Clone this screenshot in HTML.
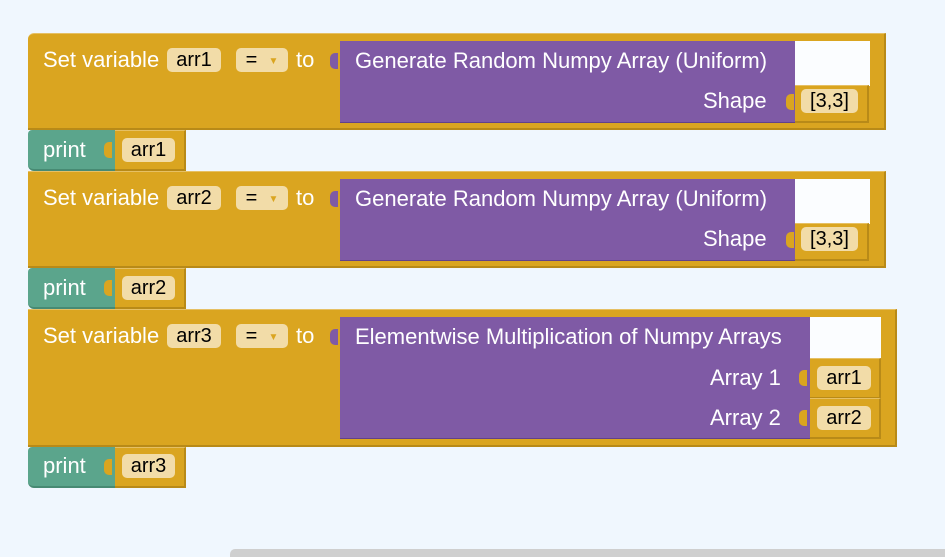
<!DOCTYPE html>
<html><head><meta charset="utf-8"><style>
body{margin:0;width:945px;height:554px;background:#f0f7fe;position:relative;overflow:hidden;font-family:"Liberation Sans",Arial,sans-serif;font-size:20px}
div,span{position:absolute;box-sizing:border-box}
.g{background:#daa520;border-bottom:2px solid #b88a18;border-right:2px solid #b88a18;border-top:1px solid #e6c064}
.p{background:#7f5aa5;border-bottom:1px solid #62428a}
.gr{background:#5ba58c;border-bottom:2px solid #478a73;border-radius:4px 0 0 6px}
.t{color:#fff;line-height:24px;white-space:nowrap;font-size:22px}
.f{background:#f2dca8;color:#000;border-radius:5px;height:24px;line-height:24px;text-align:center;white-space:nowrap}
.bg{background:#fbfdff}
.n{width:8px;height:16px;border-radius:5px 0 0 5px}
.a{position:static;color:#daa520;font-size:10px;vertical-align:2px}
</style></head><body>

<div class="g" style="left:28px;top:33px;width:858px;height:97px;border-radius:6px 0 0 0"></div>
<div class="bg" style="left:794px;top:41px;width:76px;height:45px"></div>
<div class="p" style="left:340px;top:41px;width:455px;height:82px"></div>
<span class="n" style="left:330px;top:53px;background:#7f5aa5"></span>
<span class="t" style="left:43px;top:48px">Set variable</span>
<span class="f" style="left:167px;top:48px;width:54px">arr1</span>
<span class="f" style="left:236px;top:48px;width:52px">= &nbsp;<span class="a">▼</span></span>
<span class="t" style="left:296px;top:48px">to</span>
<span class="t" style="left:355px;top:49px">Generate Random Numpy Array (Uniform)</span>
<span class="t" style="left:703px;top:89px">Shape</span>
<div class="g" style="left:795px;top:85px;width:74px;height:38px"></div>
<span class="n" style="left:786px;top:94px;background:#daa520"></span>
<span class="f" style="left:801px;top:89px;width:57px">[3,3]</span>

<div class="gr" style="left:28px;top:130px;width:88px;height:41px"></div>
<div class="g" style="left:115px;top:130px;width:71px;height:41px"></div>
<span class="n" style="left:104px;top:142px;background:#daa520"></span>
<span class="t" style="left:43px;top:138px">print</span>
<span class="f" style="left:122px;top:138px;width:53px">arr1</span>

<div class="g" style="left:28px;top:171px;width:858px;height:97px"></div>
<div class="bg" style="left:794px;top:179px;width:76px;height:45px"></div>
<div class="p" style="left:340px;top:179px;width:455px;height:82px"></div>
<span class="n" style="left:330px;top:191px;background:#7f5aa5"></span>
<span class="t" style="left:43px;top:186px">Set variable</span>
<span class="f" style="left:167px;top:186px;width:54px">arr2</span>
<span class="f" style="left:236px;top:186px;width:52px">= &nbsp;<span class="a">▼</span></span>
<span class="t" style="left:296px;top:186px">to</span>
<span class="t" style="left:355px;top:187px">Generate Random Numpy Array (Uniform)</span>
<span class="t" style="left:703px;top:227px">Shape</span>
<div class="g" style="left:795px;top:223px;width:74px;height:38px"></div>
<span class="n" style="left:786px;top:232px;background:#daa520"></span>
<span class="f" style="left:801px;top:227px;width:57px">[3,3]</span>

<div class="gr" style="left:28px;top:268px;width:88px;height:41px"></div>
<div class="g" style="left:115px;top:268px;width:71px;height:41px"></div>
<span class="n" style="left:104px;top:280px;background:#daa520"></span>
<span class="t" style="left:43px;top:276px">print</span>
<span class="f" style="left:122px;top:276px;width:53px">arr2</span>

<div class="g" style="left:28px;top:309px;width:869px;height:138px"></div>
<div class="bg" style="left:809px;top:317px;width:72px;height:42px"></div>
<div class="p" style="left:340px;top:317px;width:470px;height:122px"></div>
<span class="n" style="left:330px;top:329px;background:#7f5aa5"></span>
<span class="t" style="left:43px;top:324px">Set variable</span>
<span class="f" style="left:167px;top:324px;width:54px">arr3</span>
<span class="f" style="left:236px;top:324px;width:52px">= &nbsp;<span class="a">▼</span></span>
<span class="t" style="left:296px;top:324px">to</span>
<span class="t" style="left:355px;top:325px">Elementwise Multiplication of Numpy Arrays</span>
<span class="t" style="left:710px;top:366px">Array 1</span>
<span class="t" style="left:710px;top:406px">Array 2</span>
<div class="g" style="left:810px;top:358px;width:71px;height:41px"></div>
<div class="g" style="left:810px;top:398px;width:71px;height:41px"></div>
<span class="n" style="left:799px;top:370px;background:#daa520"></span>
<span class="n" style="left:799px;top:410px;background:#daa520"></span>
<span class="f" style="left:817px;top:366px;width:54px">arr1</span>
<span class="f" style="left:817px;top:406px;width:54px">arr2</span>

<div class="gr" style="left:28px;top:447px;width:88px;height:41px"></div>
<div class="g" style="left:115px;top:447px;width:71px;height:41px"></div>
<span class="n" style="left:104px;top:459px;background:#daa520"></span>
<span class="t" style="left:43px;top:454px">print</span>
<span class="f" style="left:122px;top:454px;width:53px">arr3</span>

<div style="left:230px;top:549px;width:715px;height:8px;background:#cfcfcf;border-radius:5px 0 0 0"></div>
</body></html>
